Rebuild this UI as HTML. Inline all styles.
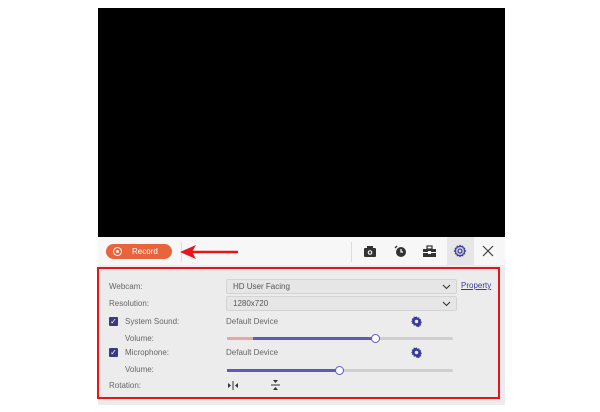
<!DOCTYPE html>
<html><head><style>
body{margin:0;width:600px;height:412px;background:#fff;position:relative;overflow:hidden;font-family:"Liberation Sans",sans-serif;}
.a{position:absolute}
.lbl{position:absolute;font-size:8px;color:#666;}
.dd{position:absolute;left:226px;width:229px;height:13px;background:#e6e6e6;border:1px solid #d4d4d4;border-radius:2px;font-size:8px;color:#555;line-height:13px;text-indent:6px}
.chev{position:absolute;right:5px;top:4px}
.cb{position:absolute;left:109px;width:9px;height:9px;background:#3a3a80;border-radius:1px;color:#fff;font-size:8px;line-height:9px;text-align:center}
.track{position:absolute;left:227px;width:226px;height:3px;background:#cfcfcf;border-radius:2px}
</style></head><body>
<div class="a" style="left:98px;top:8px;width:407px;height:229px;background:#000"></div>
<div class="a" style="left:98px;top:237px;width:407px;height:28px;background:#f7f7f7"></div>
<div class="a" style="left:98px;top:265px;width:407px;height:140px;background:#ececec"></div>
<div class="a" style="left:106px;top:244px;width:66px;height:15px;background:#e8643c;border-radius:8px;color:#fff;font-size:8px;line-height:15px">
<span class="a" style="left:7px;top:3px;width:7px;height:7px;border:1px solid #fff;border-radius:50%"></span><span class="a" style="left:10px;top:6px;width:3px;height:3px;background:#fff;border-radius:50%"></span><span class="a" style="left:26px">Record</span></div>
<div class="a" style="left:181px;top:242px;width:1px;height:20px;background:#ddd"></div>
<svg class="a" style="left:178px;top:244px" width="62" height="16"><line x1="14" y1="8" x2="60" y2="8" stroke="#e8141a" stroke-width="2.5"/><polygon points="2,8 18,1 14,8 18,15" fill="#e8141a"/></svg>
<div class="a" style="left:351px;top:242px;width:1px;height:20px;background:#ddd"></div>
<svg class="a" style="left:363px;top:245px" width="14" height="13"><rect x="1" y="3" width="12" height="9" rx="1" fill="#333"/><rect x="4" y="1" width="6" height="3" fill="#333"/><circle cx="7" cy="7.5" r="2.3" fill="#fff"/><circle cx="7" cy="7.5" r="1.2" fill="#333"/></svg>
<svg class="a" style="left:393px;top:244px" width="14" height="14"><circle cx="8" cy="8" r="5" fill="#333"/><path d="M8 5v3h2" stroke="#fff" stroke-width="1.2" fill="none"/><path d="M2 4l2-2" stroke="#333" stroke-width="1.3"/></svg>
<svg class="a" style="left:422px;top:245px" width="15" height="13"><rect x="5" y="1" width="5" height="3" fill="none" stroke="#333" stroke-width="1.2"/><rect x="1" y="4" width="13" height="8" fill="#333"/><rect x="1" y="7" width="13" height="1" fill="#fff"/><rect x="6" y="6" width="3" height="3" fill="#fff"/></svg>
<div class="a" style="left:447px;top:237px;width:27px;height:28px;background:#e6e6e6"></div>
<svg class="a" style="left:453px;top:244px" width="14" height="14" viewBox="0 0 14 14"><g fill="none" stroke="#3a3a9a" stroke-width="1.3"><circle cx="7" cy="7" r="2"/><path d="M7 1.5l1 1.3 1.6-.5.3 1.6 1.6.4-.4 1.6 1.3 1-1.3 1.1.4 1.6-1.6.4-.3 1.6-1.6-.5-1 1.3-1-1.3-1.6.5-.3-1.6-1.6-.4.4-1.6L1.5 7l1.3-1-.4-1.6 1.6-.4.3-1.6 1.6.5z"/></g></svg>
<svg class="a" style="left:482px;top:245px" width="12" height="12"><path d="M1 1l10 10M11 1L1 11" stroke="#444" stroke-width="1.2"/></svg>
<div class="a" style="left:97px;top:267px;width:399px;height:128px;border:2px solid #e8141a"></div>
<div class="lbl" style="left:109px;top:282px">Webcam:</div>
<div class="dd" style="top:279px">HD User Facing<svg class="chev" width="9" height="6"><path d="M1 1l3.5 3.5L8 1" stroke="#333" fill="none" stroke-width="1.1"/></svg></div>
<div class="a" style="left:461px;top:281px;font-size:8px;color:#3a3a9a;text-decoration:underline">Property</div>
<div class="lbl" style="left:109px;top:299px">Resolution:</div>
<div class="dd" style="top:296px">1280x720<svg class="chev" width="9" height="6"><path d="M1 1l3.5 3.5L8 1" stroke="#333" fill="none" stroke-width="1.1"/></svg></div>
<div class="cb" style="top:317px">✓</div>
<div class="lbl" style="left:125px;top:317px">System Sound:</div>
<div class="lbl" style="left:226px;top:317px">Default Device</div>
<svg class="a" style="left:411px;top:316px" width="11" height="11" viewBox="0 0 14 14"><path d="M7 0.5l1.3 1.8 2.2-.7.3 2.2 2.2.5-.6 2.1 1.6 1.6-1.6 1.5.6 2.2-2.2.5-.3 2.2-2.2-.7L7 13.5l-1.3-1.8-2.2.7-.3-2.2-2.2-.5.6-2.2L0 7l1.6-1.6-.6-2.1 2.2-.5.3-2.2 2.2.7z" fill="#3a3a9a"/><circle cx="7" cy="7" r="2.2" fill="#ececec"/></svg>
<div class="lbl" style="left:125px;top:334px">Volume:</div>
<div class="track" style="top:337px"></div>
<div class="a" style="left:227px;top:337px;width:148px;height:3px;background:#5a5ac0"></div>
<div class="a" style="left:227px;top:337px;width:26px;height:3px;background:#e8a8a0"></div>
<div class="a" style="left:371px;top:334px;width:7px;height:7px;border:1px solid #5a5ac0;background:#fff;border-radius:50%"></div>
<div class="cb" style="top:348px">✓</div>
<div class="lbl" style="left:125px;top:348px">Microphone:</div>
<div class="lbl" style="left:226px;top:348px">Default Device</div>
<svg class="a" style="left:411px;top:347px" width="11" height="11" viewBox="0 0 14 14"><path d="M7 0.5l1.3 1.8 2.2-.7.3 2.2 2.2.5-.6 2.1 1.6 1.6-1.6 1.5.6 2.2-2.2.5-.3 2.2-2.2-.7L7 13.5l-1.3-1.8-2.2.7-.3-2.2-2.2-.5.6-2.2L0 7l1.6-1.6-.6-2.1 2.2-.5.3-2.2 2.2.7z" fill="#3a3a9a"/><circle cx="7" cy="7" r="2.2" fill="#ececec"/></svg>
<div class="lbl" style="left:125px;top:365px">Volume:</div>
<div class="track" style="top:369px"></div>
<div class="a" style="left:227px;top:369px;width:112px;height:3px;background:#5a5ac0"></div>
<div class="a" style="left:335px;top:366px;width:7px;height:7px;border:1px solid #5a5ac0;background:#fff;border-radius:50%"></div>
<div class="lbl" style="left:109px;top:381px">Rotation:</div>
<svg class="a" style="left:227px;top:381px" width="12" height="9"><path d="M1 2l3 2.5L1 7z" fill="#333"/><rect x="5.5" y="0" width="1" height="9" fill="#333"/><path d="M11 2L8 4.5 11 7z" fill="#333"/></svg>
<svg class="a" style="left:271px;top:379px" width="9" height="12"><path d="M2 1h5L4.5 4z" fill="#333"/><rect x="0" y="5.5" width="9" height="1" fill="#333"/><path d="M2 11h5L4.5 8z" fill="#333"/></svg>
</body></html>
